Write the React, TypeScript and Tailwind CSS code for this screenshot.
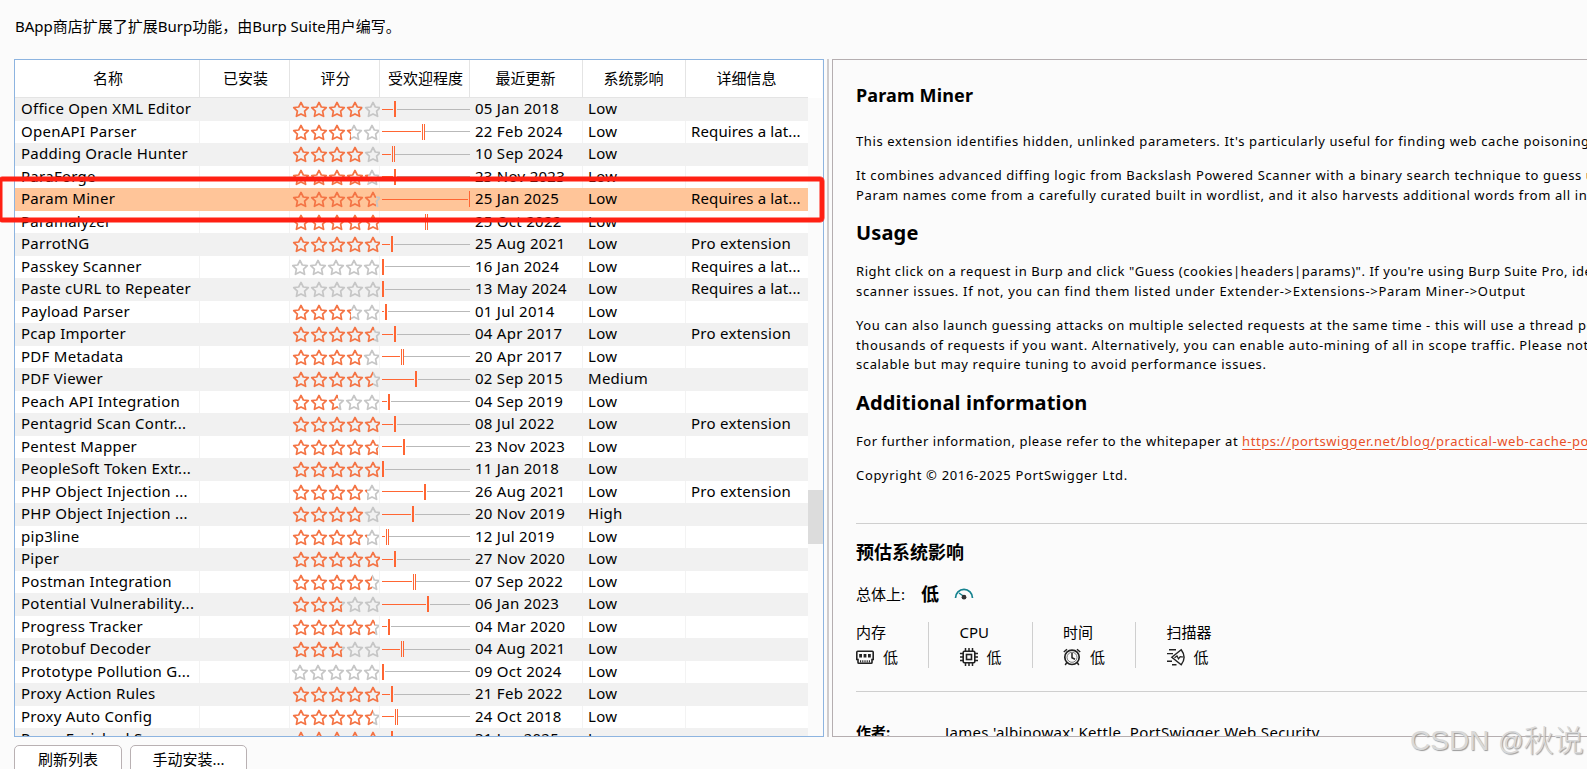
import React from 'react';

type Row = {
  name: string;
  stars: number; // filled width in px, five stars are 90
  pop: number; // marker offset inside the popularity cell
  thin?: boolean;
  date: string;
  impact: string;
  detail?: string;
};

const LAT = 'Requires a lat...';
const PRO = 'Pro extension';

const rows: Row[] = [
  { name: 'Office Open XML Editor', stars: 70, pop: 14, date: '05 Jan 2018', impact: 'Low' },
  { name: 'OpenAPI Parser', stars: 59, pop: 42, thin: true, date: '22 Feb 2024', impact: 'Low', detail: LAT },
  { name: 'Padding Oracle Hunter', stars: 72, pop: 12, thin: true, date: '10 Sep 2024', impact: 'Low' },
  { name: 'ParaForge', stars: 76, pop: 14, date: '23 Nov 2023', impact: 'Low' },
  { name: 'Param Miner', stars: 84, pop: 89, date: '25 Jan 2025', impact: 'Low', detail: LAT },
  { name: 'Paramalyzer', stars: 87, pop: 45, thin: true, date: '25 Oct 2022', impact: 'Low' },
  { name: 'ParrotNG', stars: 90, pop: 11, date: '25 Aug 2021', impact: 'Low', detail: PRO },
  { name: 'Passkey Scanner', stars: 0, pop: 2, date: '16 Jan 2024', impact: 'Low', detail: LAT },
  { name: 'Paste cURL to Repeater', stars: 0, pop: 2, date: '13 May 2024', impact: 'Low', detail: LAT },
  { name: 'Payload Parser', stars: 59, pop: 5, date: '01 Jul 2014', impact: 'Low' },
  { name: 'Pcap Importer', stars: 82, pop: 14, date: '04 Apr 2017', impact: 'Low', detail: PRO },
  { name: 'PDF Metadata', stars: 70, pop: 21, thin: true, date: '20 Apr 2017', impact: 'Low' },
  { name: 'PDF Viewer', stars: 81, pop: 35, date: '02 Sep 2015', impact: 'Medium' },
  { name: 'Peach API Integration', stars: 46, pop: 8, date: '04 Sep 2019', impact: 'Low' },
  { name: 'Pentagrid Scan Contr...', stars: 90, pop: 14, date: '08 Jul 2022', impact: 'Low', detail: PRO },
  { name: 'Pentest Mapper', stars: 86, pop: 23, date: '23 Nov 2023', impact: 'Low' },
  { name: 'PeopleSoft Token Extr...', stars: 90, pop: 2, date: '11 Jan 2018', impact: 'Low' },
  { name: 'PHP Object Injection ...', stars: 75, pop: 44, date: '26 Aug 2021', impact: 'Low', detail: PRO },
  { name: 'PHP Object Injection ...', stars: 73, pop: 32, date: '20 Nov 2019', impact: 'High' },
  { name: 'pip3line', stars: 75, pop: 6, thin: true, date: '12 Jul 2019', impact: 'Low' },
  { name: 'Piper', stars: 90, pop: 14, date: '27 Nov 2020', impact: 'Low' },
  { name: 'Postman Integration', stars: 80, pop: 33, thin: true, date: '07 Sep 2022', impact: 'Low' },
  { name: 'Potential Vulnerability...', stars: 50, pop: 47, date: '06 Jan 2023', impact: 'Low' },
  { name: 'Progress Tracker', stars: 83, pop: 8, date: '04 Mar 2020', impact: 'Low' },
  { name: 'Protobuf Decoder', stars: 50, pop: 21, thin: true, date: '04 Aug 2021', impact: 'Low' },
  { name: 'Prototype Pollution G...', stars: 0, pop: 2, date: '09 Oct 2024', impact: 'Low' },
  { name: 'Proxy Action Rules', stars: 90, pop: 11, date: '21 Feb 2022', impact: 'Low' },
  { name: 'Proxy Auto Config', stars: 81, pop: 15, thin: true, date: '24 Oct 2018', impact: 'Low' },
  { name: 'Proxy Enriched S...', stars: 90, pop: 11, date: '31 Jan 2025', impact: 'Low' },
];

const STAR = 'M9 2.4 L11.3 7 L16.3 7.6 L12.6 11.2 L13.6 16.3 L9 13.9 L4.4 16.3 L5.4 11.2 L1.7 7.6 L6.7 7 Z';

const StarStrip: React.FC<{ color: string }> = ({ color }) => (
  <svg className="block shrink-0" width="90" height="19" viewBox="0 0 90 19" fill="none" stroke={color} strokeWidth="1.7" strokeLinejoin="round">
    {[0, 18, 36, 54, 72].map((x) => (
      <path key={x} d={STAR} transform={`translate(${x} 0)`} />
    ))}
  </svg>
);

const Rating: React.FC<{ filled: number }> = ({ filled }) => (
  <div className="flex w-[88px] overflow-hidden">
    <div className="shrink-0 overflow-hidden" style={{ width: filled }}>
      <StarStrip color="#f47445" />
    </div>
    <div className="flex min-w-0 flex-1 justify-end overflow-hidden">
      <div className="-mr-[2px]">
        <StarStrip color="#c6c6c6" />
      </div>
    </div>
  </div>
);

const Popularity: React.FC<{ at: number; thin?: boolean; mid: number }> = ({ at, thin, mid }) => (
  <svg className="block" width="90" height="22" viewBox="0 0 90 22" shapeRendering="crispEdges">
    {at > 3 && <rect x="2" y={mid} width={at - 3} height="1" fill="#ff6633" />}
    <rect x={at + 3} y={mid} width={Math.max(0, 87 - at)} height="1" fill="#b9b9b9" />
    {thin ? (
      <>
        <rect x={at} y="3" width="1" height="16" fill="#ff6633" />
        <rect x={at + 2} y="3" width="1" height="16" fill="#ff6633" />
      </>
    ) : (
      <rect x={at} y="3" width={at > 88 ? 1 : 2} height="16" fill="#ff6633" />
    )}
  </svg>
);

const grid = 'grid grid-cols-[185px_90px_90px_90px_113px_103px_122px]';

const headers = ['名称', '已安装', '评分', '受欢迎程度', '最近更新', '系统影响', '详细信息'];

const TableRow: React.FC<{ row: Row; index: number }> = ({ row, index }) => {
  const odd = index % 2 === 1;
  const selected = row.name === 'Param Miner';
  const bg = selected ? 'bg-[#ffc599]' : odd ? 'bg-white' : 'bg-[#f1f1f1]';
  const line = odd ? 'border-r border-[#f3f3f3]' : '';
  return (
    <div className={`${grid} ${bg} ${odd ? 'h-[22px]' : 'h-[23px]'} shrink-0 whitespace-nowrap text-[15px] leading-[20px] tracking-[0.27px]`}>
      <div className={`pl-[6px] ${line}`}>{row.name}</div>
      <div className={line} />
      <div className={`flex items-start pl-[2px] pt-[2px] ${line}`}>
        <Rating filled={row.stars} />
      </div>
      <Popularity at={row.pop} thin={row.thin} mid={odd ? 10 : 11} />
      <div className={`pl-[5px] ${line}`}>{row.date}</div>
      <div className={`pl-[5px] ${line}`}>{row.impact}</div>
      <div className={`pl-[5px] ${row.detail === LAT ? 'tracking-[0.12px]' : ''}`}>{row.detail}</div>
    </div>
  );
};

const GaugeIcon = () => (
  <svg className="-mt-[2px]" width="20" height="15" viewBox="0 0 20 15" fill="none">
    <path d="M1.5 12 A8.5 8.7 0 0 1 18.5 12" stroke="#15828f" strokeWidth="1.7" />
    <path d="M5 7 L10 10.5" stroke="#15828f" strokeWidth="1.5" />
    <circle cx="10" cy="11.2" r="2.4" fill="#333" />
  </svg>
);

const MemoryIcon = () => (
  <svg width="18" height="18" viewBox="0 0 18 18" fill="none" stroke="#222" strokeWidth="1.6">
    <path d="M1.8 3.2 H16.2 Q17.2 3.2 17.2 4.2 V11.5 H16 V14.5 Q16 15.2 15.2 15.2 H2.8 Q2 15.2 2 14.5 V11.5 H.8 V4.2 Q.8 3.2 1.8 3.2 Z" />
    <path d="M4.6 6 V9.6 M9 6 V9.6 M13.4 6 V9.6" strokeWidth="2.8" />
    <path d="M4.6 12.3 V14.5 M6.8 12.3 V14.5 M9 12.3 V14.5 M11.2 12.3 V14.5 M13.4 12.3 V14.5" strokeWidth="1.1" />
  </svg>
);

const CpuIcon = () => (
  <svg width="18" height="18" viewBox="0 0 18 18" fill="none" stroke="#222" strokeWidth="1.6">
    <rect x="3.2" y="3.2" width="11.6" height="11.6" rx="1.2" />
    <rect x="6.5" y="6.5" width="5" height="5" />
    <path d="M5.5 0 V3 M9 0 V3 M12.5 0 V3 M5.5 15 V18 M9 15 V18 M12.5 15 V18 M0 5.5 H3 M0 9 H3 M0 12.5 H3 M15 5.5 H18 M15 9 H18 M15 12.5 H18" strokeWidth="1.5" />
  </svg>
);

const ClockIcon = () => (
  <svg width="18" height="18" viewBox="0 0 18 18" fill="none" stroke="#222" strokeWidth="1.7">
    <circle cx="9" cy="9.3" r="7.2" />
    <circle cx="9" cy="9.3" r="5" strokeWidth=".6" />
    <path d="M9 5 V9.8 L12 11.2 M.8 4 L4 1.2 M17.2 4 L14 1.2 M3.7 14.7 L2.2 17 M14.3 14.7 L15.8 17" strokeWidth="1.5" />
  </svg>
);

const ScannerIcon = () => (
  <svg width="18" height="18" viewBox="0 0 18 18" fill="none" stroke="#222" strokeWidth="1.4">
    <path d="M4.8 9.3 L14.2 1.8 Q20 9.3 14.2 16.8 Z" />
    <path d="M2 1.8 H9 M0 5.6 H6 M0 13.2 H5 M5 16.8 H9.5" />
    <path d="M7.5 9.8 L10 8 L11.5 10.8 L13.2 8.6 L16.5 9" strokeWidth="1.2" />
  </svg>
);

const metrics = [
  { label: '内存', icon: <MemoryIcon /> },
  { label: 'CPU', icon: <CpuIcon /> },
  { label: '时间', icon: <ClockIcon /> },
  { label: '扫描器', icon: <ScannerIcon /> },
];

const Details: React.FC = () => (
  <div className="h-[678px] min-w-0 flex-1 overflow-hidden border-y border-l border-[#b5aeb0] pl-[23px]">
    <div className="w-[900px] whitespace-nowrap">
      <h1 className="mt-[23px] h-[24px] text-[18px] font-bold leading-[24px] tracking-[0.15px]">Param Miner</h1>
      <div className="mt-[24px] text-[13px] leading-[20px] tracking-[0.62px]">
        <p>This extension identifies hidden, unlinked parameters. It's particularly useful for finding web cache poisoning vulnerabilities.</p>
        <p className="mt-[14px]">
          It combines advanced diffing logic from Backslash Powered Scanner with a binary search technique to guess up to
          <br />
          Param names come from a carefully curated built in wordlist, and it also harvests additional words from all in-scope
        </p>
        <h2 className="mt-[14px] h-[28px] text-[20px] font-bold leading-[28px] tracking-[0.15px]">Usage</h2>
        <p className="mt-[14px]">
          <span className="tracking-[0.55px]">Right click on a request in Burp and click "Guess (cookies|headers|params)". If you're using Burp Suite Pro, identified</span>
          <br />
          <span className="tracking-[0.68px]">scanner issues. If not, you can find them listed under Extender-&gt;Extensions-&gt;Param Miner-&gt;Output</span>
        </p>
        <p className="mt-[15px] leading-[19.5px]">
          You can also launch guessing attacks on multiple selected requests at the same time - this will use a thread pool
          <br />
          thousands of requests if you want. Alternatively, you can enable auto-mining of all in scope traffic. Please note
          <br />
          scalable but may require tuning to avoid performance issues.
        </p>
        <h2 className="mt-[14px] h-[28px] text-[20px] font-bold leading-[28px] tracking-[0.15px]">Additional information</h2>
        <p className="mt-[14px] tracking-[0.56px]">
          For further information, please refer to the whitepaper at{' '}
          <a className="text-[#e8502a] underline underline-offset-[3px]">https://portswigger.net/blog/practical-web-cache-poisoning</a>
        </p>
        <p className="mt-[14px] tracking-[0.68px]">Copyright © 2016-2025 PortSwigger Ltd.</p>
      </div>

      <div className="mt-[38.5px] h-px bg-[#cfcfcf]" />
      <h3 className="mt-[15px] h-[26px] text-[18px] font-bold leading-[26px]">预估系统影响</h3>
      <div className="mt-[16px] flex h-[26px] items-center text-[15px]">
        <span className="w-[65px]">总体上:</span>
        <span className="w-[33px] text-[18px] font-bold">低</span>
        <GaugeIcon />
      </div>
      <div className="mt-[15px] flex h-[46px] text-[15px]">
        {metrics.map((m, i) => (
          <div key={m.label} className="flex w-[103.5px] shrink-0">
            <div className="-mt-px w-[72px] leading-[22px]">
              <div className="h-[25px]">{m.label}</div>
              <div className="flex h-[22px] items-center gap-[9px]">
                {m.icon}
                <span>低</span>
              </div>
            </div>
            {i < 3 && <div className="h-[46px] w-px bg-[#cfcfcf]" />}
          </div>
        ))}
      </div>
      <div className="mt-[23px] h-px bg-[#cfcfcf]" />
      <div className="mt-[28px] flex text-[15px] leading-[24px]">
        <span className="w-[89px] font-bold">作者:</span>
        <span className="tracking-[0.32px]">James 'albinowax' Kettle, PortSwigger Web Security</span>
      </div>
    </div>
  </div>
);

export default function App() {
  return (
    <div className="relative h-[769px] w-full overflow-hidden bg-[#fbfbfb] font-['Noto_Sans','Noto_Sans_CJK_SC',sans-serif] text-black">
      <p className="h-[59px] whitespace-nowrap pl-[15px] pt-[14px] text-[15px] leading-[24px]">BApp商店扩展了扩展Burp功能，由Burp Suite用户编写。</p>

      <div className="flex">
        <div className="ml-[14px] flex h-[678px] w-[810px] shrink-0 flex-col border border-[#8db4e0]">
          <div className="w-[807px] shrink-0 bg-white">
            <div className={`${grid} h-[38px] w-[793px] border-b border-[#e4e4e4] text-[15px] leading-[36px]`}>
              {headers.map((h, i) => (
                <div key={h} className={`whitespace-nowrap text-center ${i < 4 ? 'pl-[2px]' : 'pr-[1px]'} ${i < 6 ? 'border-r border-[#e4e4e4]' : ''}`}>
                  {h}
                </div>
              ))}
            </div>
          </div>
          <div className="flex min-h-0 flex-1">
            <div className="flex w-[793px] flex-col overflow-hidden">
              {rows.map((r, i) => (
                <TableRow key={i} row={r} index={i} />
              ))}
            </div>
            <div className="w-[15px] pt-[392px]">
              <div className="h-[54px] bg-[#dcdcdc]" />
            </div>
          </div>
        </div>
        <div className="ml-[3px] mr-[3px] h-[678px] w-[2px] bg-[#cfcccd]" />
        <Details />
      </div>

      <div className="mt-[8px] flex gap-[8px] pl-[14px] text-[15px] leading-[26px]">
        <button className="h-[34px] w-[108px] rounded-[5px] border-[1.5px] border-[#b9b1b3] bg-white pb-[6px]">刷新列表</button>
        <button className="h-[34px] w-[117px] rounded-[5px] border-[1.5px] border-[#b9b1b3] bg-white pb-[6px]">手动安装...</button>
      </div>

      {/* highlight frame around the selected row */}
      <div className="absolute -left-[2px] top-[177px] h-[45px] w-[826px] rounded-[4px] border-[4px] border-[#ff2013] shadow-[0_0_0_0.5px_#ff2013,inset_0_0_0_0.5px_#ff2013]" />

      <div className="absolute left-[1410px] top-[723px] flex items-center whitespace-nowrap font-['Liberation_Sans','Noto_Sans_CJK_SC',sans-serif] text-[28px] leading-[36px] text-[#d9d9d9] [text-shadow:1px_1px_1px_#9a9a9a]">
        <span>CSDN</span>
        <span className="ml-[9px] text-[25px]">@</span>
        <span className="text-[30px] font-light">秋说</span>
      </div>
    </div>
  );
}
